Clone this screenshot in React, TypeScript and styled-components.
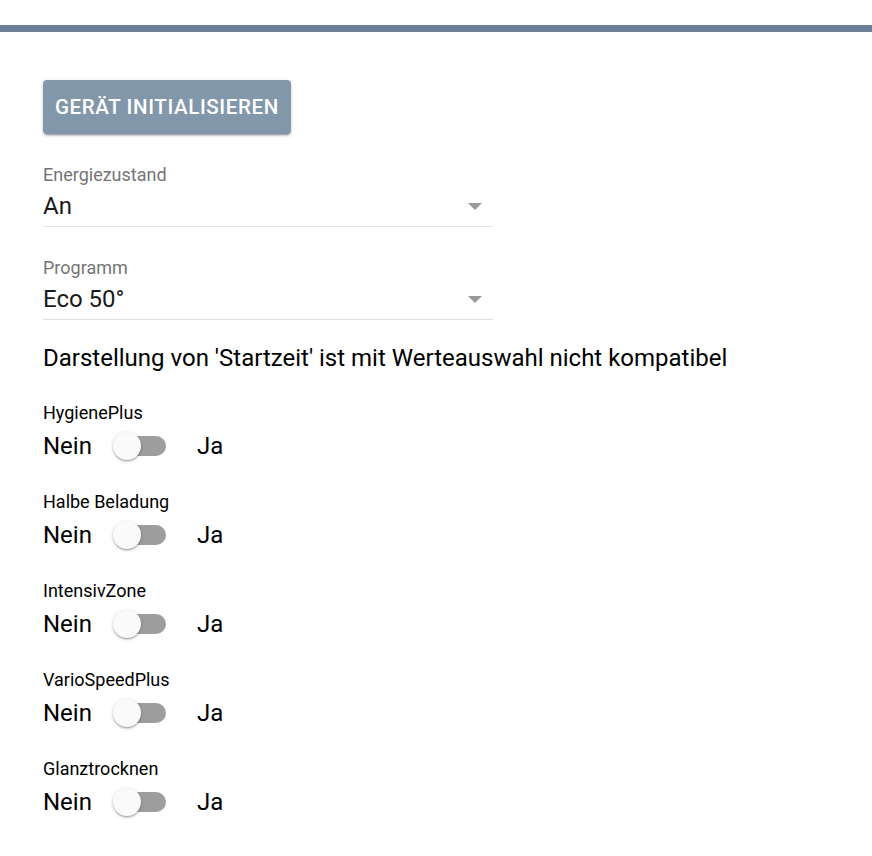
import React from 'react'
import styled, { createGlobalStyle } from 'styled-components'

const GlobalStyle = createGlobalStyle`
  body {
    margin: 0;
    background: #fff;
    font-family: Roboto, 'Liberation Sans', sans-serif;
    color: #000;
  }
`

const TopBar = styled.div`
  margin-top: 25px;
  height: 7px;
  background-color: #6b8096;
`

const Content = styled.main`
  padding: 48px 43px 0;
  display: flex;
  flex-direction: column;
  align-items: flex-start;
`

const InitButton = styled.button`
  height: 54px;
  padding: 0 12px;
  border: none;
  border-radius: 4px;
  background-color: #8397ab;
  color: #fff;
  font-family: Roboto, sans-serif;
  font-size: 20.5px;
  font-weight: 500;
  letter-spacing: 0.03em;
  text-transform: uppercase;
  box-shadow: 0 3px 1px -2px rgba(0, 0, 0, 0.2), 0 2px 2px 0 rgba(0, 0, 0, 0.14),
    0 1px 5px 0 rgba(0, 0, 0, 0.12);
  cursor: pointer;
`

const Field = styled.div`
  width: 450px;
  margin-top: 30px;
`

const FieldLabel = styled.div`
  font-size: 18px;
  line-height: 22px;
  color: #757575;
`

const SelectBox = styled.div`
  display: flex;
  align-items: center;
  justify-content: space-between;
  height: 40px;
  border-bottom: 1px solid #e0e0e0;
`

const SelectValue = styled.span`
  font-size: 24px;
  color: #1a1a1a;
`

const Arrow = styled.span`
  width: 0;
  height: 0;
  margin-right: 11px;
  border-left: 7px solid transparent;
  border-right: 7px solid transparent;
  border-top: 7px solid #999;
`

const Notice = styled.p`
  margin: 24px 0 0;
  font-size: 24px;
  line-height: 28px;
`

const ToggleGroup = styled.div`
  margin-top: 30px;
  & + & {
    margin-top: 23px;
  }
`

const ToggleLabel = styled.div`
  font-size: 18px;
  line-height: 22px;
`

const ToggleRow = styled.div`
  display: flex;
  align-items: center;
  height: 44px;
  font-size: 24px;
`

const SwitchTrack = styled.span`
  position: relative;
  display: inline-block;
  width: 53px;
  height: 20px;
  margin: 0 31px 0 21px;
  &::before {
    content: '';
    position: absolute;
    left: 5px;
    right: 0;
    top: 0;
    bottom: 0;
    border-radius: 10px;
    background-color: #9e9e9e;
  }
`

const SwitchThumb = styled.span`
  position: absolute;
  left: 0;
  top: -4px;
  width: 28px;
  height: 28px;
  border-radius: 50%;
  background-color: #fafafa;
  box-shadow: 0 2px 2px -1px rgba(0, 0, 0, 0.22), 0 1px 2px 0 rgba(0, 0, 0, 0.16),
    0 1px 4px 0 rgba(0, 0, 0, 0.14);
`

const options = ['HygienePlus', 'Halbe Beladung', 'IntensivZone', 'VarioSpeedPlus', 'Glanztrocknen']

export default function App() {
  return (
    <>
      <GlobalStyle />
      <TopBar />
      <Content>
        <InitButton>Gerät initialisieren</InitButton>
        <Field>
          <FieldLabel>Energiezustand</FieldLabel>
          <SelectBox>
            <SelectValue>An</SelectValue>
            <Arrow />
          </SelectBox>
        </Field>
        <Field>
          <FieldLabel>Programm</FieldLabel>
          <SelectBox>
            <SelectValue>Eco 50°</SelectValue>
            <Arrow />
          </SelectBox>
        </Field>
        <Notice>Darstellung von 'Startzeit' ist mit Werteauswahl nicht kompatibel</Notice>
        {options.map((name) => (
          <ToggleGroup key={name}>
            <ToggleLabel>{name}</ToggleLabel>
            <ToggleRow>
              <span>Nein</span>
              <SwitchTrack>
                <SwitchThumb />
              </SwitchTrack>
              <span>Ja</span>
            </ToggleRow>
          </ToggleGroup>
        ))}
      </Content>
    </>
  )
}
